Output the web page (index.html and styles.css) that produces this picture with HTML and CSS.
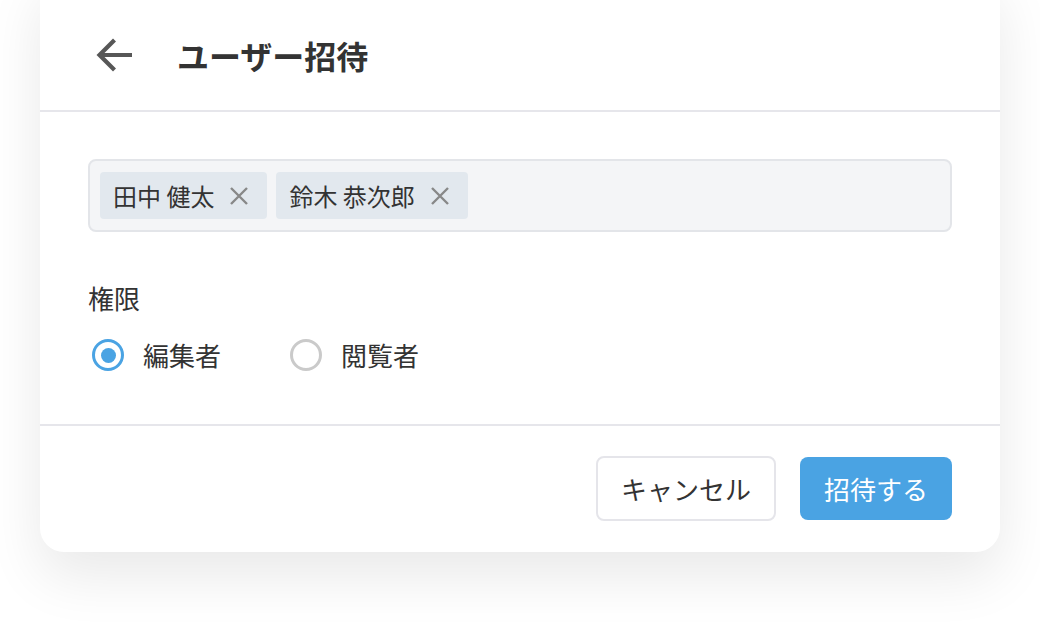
FILE: index.html
```html
<!DOCTYPE html>
<html lang="ja">
<head>
<meta charset="utf-8">
<title>ユーザー招待</title>
<link rel="stylesheet" href="styles.css">
</head>
<body>
<div class="page">
  <div class="card">
    <div class="header">
      <svg class="back" width="38" height="36" viewBox="0 0 38 36" aria-hidden="true">
        <path d="M4 18H37" fill="none" stroke="#575757" stroke-width="4.2"/>
        <path d="M19.5 3L4.5 18L19.5 33" fill="none" stroke="#575757" stroke-width="4.2" stroke-linejoin="miter"/>
      </svg>
      <h1 class="title">ユーザー招待</h1>
    </div>
    <div class="body">
      <div class="tags">
        <span class="tag">田中 健太<svg class="x" width="20" height="20" viewBox="0 0 20 20"><path d="M2 2L18 18M18 2L2 18" stroke="#888" stroke-width="2.4" fill="none"/></svg></span>
        <span class="tag">鈴木 恭次郎<svg class="x" width="20" height="20" viewBox="0 0 20 20"><path d="M2 2L18 18M18 2L2 18" stroke="#888" stroke-width="2.4" fill="none"/></svg></span>
      </div>
      <div class="label">権限</div>
      <div class="radios">
        <label class="option"><span class="radio checked"></span>編集者</label>
        <label class="option"><span class="radio"></span>閲覧者</label>
      </div>
    </div>
    <div class="footer">
      <button class="btn cancel">キャンセル</button>
      <button class="btn primary">招待する</button>
    </div>
  </div>
</div>
</body>
</html>
```

FILE: styles.css
```css
html, body {
  margin: 0;
  padding: 0;
  background: #ffffff;
}
body {
  font-family: "Noto Sans CJK JP", "Noto Sans", sans-serif;
  color: #333333;
}
.page {
  padding: 0 40px 80px;
}
.card {
  margin-top: -30px;
  background: #ffffff;
  border-radius: 24px;
  box-shadow: 0 24px 56px rgba(0, 0, 0, 0.09);
}
.header {
  height: 142px;
  box-sizing: border-box;
  padding: 30px 0 0 55px;
  display: flex;
  align-items: center;
  gap: 44px;
  border-bottom: 2px solid #e6e6eb;
}
.back {
  display: block;
  flex: none;
}
.title {
  margin: 0;
  font-size: 32px;
  font-weight: 700;
  color: #333333;
  line-height: 1;
}
.body {
  padding: 47px 48px 0;
  height: 312px;
  box-sizing: border-box;
}
.tags {
  display: flex;
  gap: 9px;
  padding: 11px 10px;
  background: #f4f5f7;
  border: 2px solid #e3e5e9;
  border-radius: 8px;
}
.tag {
  display: flex;
  align-items: center;
  height: 47px;
  padding: 0 18px 0 13px;
  background: #e2e8ee;
  border-radius: 4px;
  font-size: 24px;
  color: #333333;
}
.x {
  display: block;
  margin-left: 15px;
}
.label {
  margin-top: 47px;
  font-size: 26px;
  line-height: 38px;
  color: #333333;
}
.radios {
  margin-top: 19px;
  display: flex;
  gap: 65px;
}
.option {
  display: flex;
  align-items: center;
  gap: 19px;
  font-size: 26px;
  line-height: 38px;
  color: #333333;
}
.radio {
  width: 32px;
  height: 32px;
  box-sizing: border-box;
  border: 3px solid #cacaca;
  border-radius: 50%;
  margin-left: 4px;
  display: flex;
  align-items: center;
  justify-content: center;
}
.radio.checked {
  border: 3.5px solid #4aa3e3;
}
.radio.checked::after {
  content: "";
  width: 15px;
  height: 15px;
  border-radius: 50%;
  background: #4aa3e3;
}
.footer {
  border-top: 2px solid #e6e6eb;
  padding: 30px 48px 31px;
  display: flex;
  justify-content: flex-end;
  gap: 24px;
}
.btn {
  font-family: "Noto Sans CJK JP", "Noto Sans", sans-serif;
  font-size: 26px;
  height: 65px;
  border-radius: 8px;
  padding: 0 24px;
  cursor: pointer;
}
.cancel {
  background: #ffffff;
  border: 2px solid #e5e5ea;
  color: #333333;
  padding: 0 23px;
}
.primary {
  background: #4aa3e3;
  border: none;
  color: #ffffff;
  height: 63px;
  margin-top: 1px;
}
```
